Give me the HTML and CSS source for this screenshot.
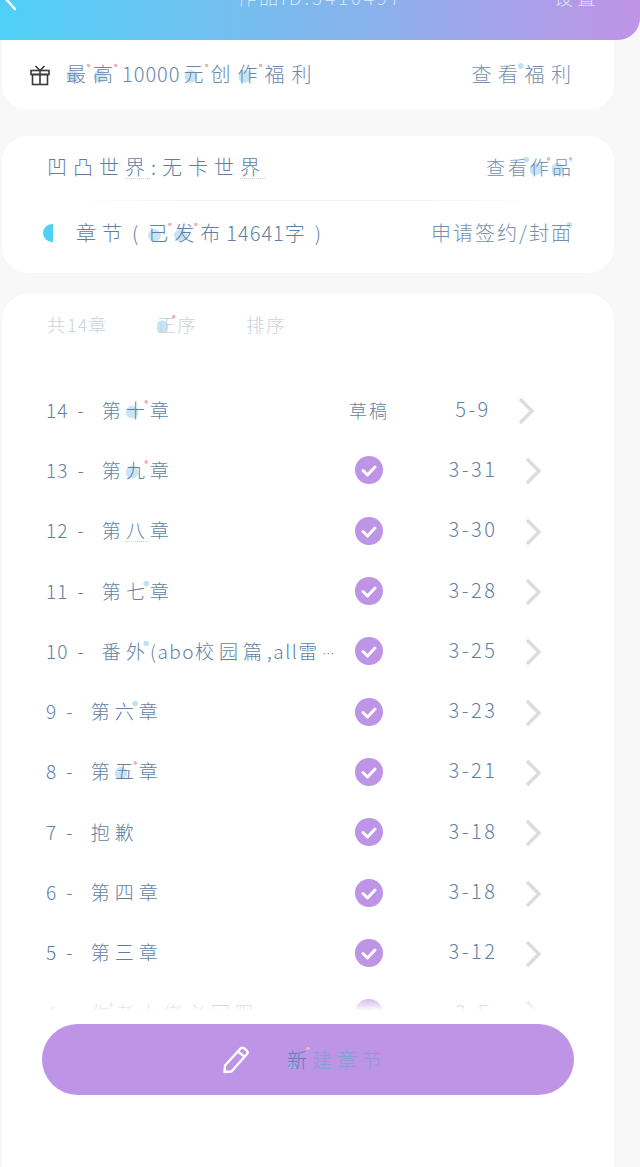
FILE: index.html
```html
<!doctype html>
<html lang="zh-CN">
  <head>
    <meta charset="UTF-8" />
    <meta name="viewport" content="width=device-width, initial-scale=1.0" />
    <title>作品管理</title>
    <link rel="stylesheet" href="styles.css">
  </head>
  <body>
    <header class="topbar">
      <svg class="back" width="18" height="14" viewBox="0 0 18 14"><path d="M5 -2 L15 9" fill="none" stroke="#fff" stroke-width="2.4" stroke-linecap="round"/></svg>
      <span class="topbar-title">作品ID:5410497</span>
      <span class="topbar-action">设置</span>
    </header>

    <section class="card welfare">
      <svg class="gift" width="22" height="22" viewBox="0 0 22 22" fill="none" stroke="#3a3a3a" stroke-width="1.6"><rect x="2" y="6.5" width="18" height="4"/><rect x="3.5" y="10.5" width="15" height="10"/><path d="M11 6.5 V20.5 M11 6.5 L6.5 2 M11 6.5 L15.5 2"/></svg>
      <span class="welfare-text"><span class="m">最</span><span class="m">高</span><span class="d">10000</span><span class="m">元</span>创<span class="m">作</span>福利</span>
      <a class="link wide">查<span class="s">看</span>福利</a>
    </section>

    <section class="card info">
      <div class="info-row title-row">
        <span class="book-name">凹凸世<span class="u">界</span>:无卡世<span class="u">界</span></span>
        <a class="link small">查<span class="s">看</span><span class="m">作</span><span class="m">品</span></a>
      </div>
      <div class="divider"></div>
      <div class="info-row chapter-row">
        <span class="half-dot"></span>
        <span class="chapter-count">章节<span class="p">(</span><span class="m">已</span><span class="m">发</span>布<span class="d">14641</span>字<span class="p">)</span></span>
        <a class="link sign">申请签约/封<span class="s">面</span></a>
      </div>
    </section>

    <section class="card chapters">
      <div class="tabs">
        <span class="tab">共<span class="d">14</span>章</span>
        <span class="tab"><span class="m">正</span>序</span>
        <span class="tab">排序</span>
      </div>

      <ul class="list">
        <li class="row">
          <span class="name"><span class="num">14 -</span>第<span class="m">十</span>章</span>
          <span class="state">草稿</span>
          <span class="date">5-9</span>
          <svg class="arrow shifted" width="18" height="28" viewBox="0 0 18 28"><path d="M2 2 L14 14 L2 26" /></svg>
        </li>
        <li class="row">
          <span class="name"><span class="num">13 -</span>第<span class="m">九</span>章</span>
          <span class="state"><svg class="check" width="28" height="28" viewBox="0 0 28 28"><circle cx="14" cy="14" r="14" /><path d="M8 14.5 L12.5 19 L20 11" /></svg></span>
          <span class="date">3-31</span>
          <svg class="arrow" width="18" height="28" viewBox="0 0 18 28"><path d="M2 2 L14 14 L2 26" /></svg>
        </li>
        <li class="row">
          <span class="name"><span class="num">12 -</span>第<span class="u">八</span>章</span>
          <span class="state"><svg class="check" width="28" height="28" viewBox="0 0 28 28"><circle cx="14" cy="14" r="14" /><path d="M8 14.5 L12.5 19 L20 11" /></svg></span>
          <span class="date">3-30</span>
          <svg class="arrow" width="18" height="28" viewBox="0 0 18 28"><path d="M2 2 L14 14 L2 26" /></svg>
        </li>
        <li class="row">
          <span class="name"><span class="num">11 -</span>第<span class="s">七</span>章</span>
          <span class="state"><svg class="check" width="28" height="28" viewBox="0 0 28 28"><circle cx="14" cy="14" r="14" /><path d="M8 14.5 L12.5 19 L20 11" /></svg></span>
          <span class="date">3-28</span>
          <svg class="arrow" width="18" height="28" viewBox="0 0 18 28"><path d="M2 2 L14 14 L2 26" /></svg>
        </li>
        <li class="row">
          <span class="name"><span class="num">10 -</span>番<span class="s">外</span><span class="lat">(abo</span>校园篇<span class="lat">,all</span>雷<span class="more">…</span></span>
          <span class="state"><svg class="check" width="28" height="28" viewBox="0 0 28 28"><circle cx="14" cy="14" r="14" /><path d="M8 14.5 L12.5 19 L20 11" /></svg></span>
          <span class="date">3-25</span>
          <svg class="arrow" width="18" height="28" viewBox="0 0 18 28"><path d="M2 2 L14 14 L2 26" /></svg>
        </li>
        <li class="row">
          <span class="name"><span class="num">9 -</span>第<span class="s">六</span>章</span>
          <span class="state"><svg class="check" width="28" height="28" viewBox="0 0 28 28"><circle cx="14" cy="14" r="14" /><path d="M8 14.5 L12.5 19 L20 11" /></svg></span>
          <span class="date">3-23</span>
          <svg class="arrow" width="18" height="28" viewBox="0 0 18 28"><path d="M2 2 L14 14 L2 26" /></svg>
        </li>
        <li class="row">
          <span class="name"><span class="num">8 -</span>第<span class="m">五</span>章</span>
          <span class="state"><svg class="check" width="28" height="28" viewBox="0 0 28 28"><circle cx="14" cy="14" r="14" /><path d="M8 14.5 L12.5 19 L20 11" /></svg></span>
          <span class="date">3-21</span>
          <svg class="arrow" width="18" height="28" viewBox="0 0 18 28"><path d="M2 2 L14 14 L2 26" /></svg>
        </li>
        <li class="row">
          <span class="name"><span class="num">7 -</span>抱歉</span>
          <span class="state"><svg class="check" width="28" height="28" viewBox="0 0 28 28"><circle cx="14" cy="14" r="14" /><path d="M8 14.5 L12.5 19 L20 11" /></svg></span>
          <span class="date">3-18</span>
          <svg class="arrow" width="18" height="28" viewBox="0 0 18 28"><path d="M2 2 L14 14 L2 26" /></svg>
        </li>
        <li class="row">
          <span class="name"><span class="num">6 -</span>第四章</span>
          <span class="state"><svg class="check" width="28" height="28" viewBox="0 0 28 28"><circle cx="14" cy="14" r="14" /><path d="M8 14.5 L12.5 19 L20 11" /></svg></span>
          <span class="date">3-18</span>
          <svg class="arrow" width="18" height="28" viewBox="0 0 18 28"><path d="M2 2 L14 14 L2 26" /></svg>
        </li>
        <li class="row">
          <span class="name"><span class="num">5 -</span>第三章</span>
          <span class="state"><svg class="check" width="28" height="28" viewBox="0 0 28 28"><circle cx="14" cy="14" r="14" /><path d="M8 14.5 L12.5 19 L20 11" /></svg></span>
          <span class="date">3-12</span>
          <svg class="arrow" width="18" height="28" viewBox="0 0 18 28"><path d="M2 2 L14 14 L2 26" /></svg>
        </li>
        <li class="row">
          <span class="name"><span class="num">4 -</span><span class="m">作</span>者大佬必回限</span>
          <span class="state"><svg class="check" width="28" height="28" viewBox="0 0 28 28"><circle cx="14" cy="14" r="14" /><path d="M8 14.5 L12.5 19 L20 11" /></svg></span>
          <span class="date">3-5</span>
          <svg class="arrow" width="18" height="28" viewBox="0 0 18 28"><path d="M2 2 L14 14 L2 26" /></svg>
        </li>
      </ul>

      <button class="new-chapter">
        <svg width="30" height="30" viewBox="0 0 30 30" fill="none" stroke="#fff" stroke-width="2.4" stroke-linejoin="round"><path d="M3.5 27 L4 20.5 L19.5 3.5 Q21 2 23 3.2 L25.8 5.6 Q27.4 7.2 26 9 L10.5 26.5 Z M17 6.5 L23.8 12"/></svg>
        <span class="new-label"><span class="m">新</span>建章节</span>
      </button>
    </section>
  </body>
</html>
```

FILE: styles.css
```css
* {
  box-sizing: border-box;
}
html,
body {
  height: 100%;
}
body {
  margin: 0;
  background-color: #f8f8f8;
  color: #5f7fa5;
  font-family: "Noto Sans CJK SC", "Noto Sans", sans-serif;
  font-weight: 300;
  overflow: hidden;
}
ul {
  list-style: none;
  margin: 0;
  padding: 0;
}

/* top bar, cut off by the top of the screen */
.topbar {
  position: relative;
  height: 40px;
  display: flex;
  justify-content: center;
  overflow: hidden;
  background: linear-gradient(90deg, #4fd0f6 0%, #86b4ec 55%, #c093e6 100%);
  border-bottom-right-radius: 22px;
  color: #d5e4f6;
  font-size: 19px;
}
.back {
  position: absolute;
  left: 0;
  top: 0;
}
.topbar-title {
  margin-top: -17px;
  line-height: 28px;
  letter-spacing: 2.8px;
}
.topbar-action {
  position: absolute;
  right: 40px;
  top: -17px;
  line-height: 28px;
  letter-spacing: 4px;
}

.card {
  margin: 0 26px 0 2px;
  background-color: #fff;
  border-radius: 26px;
}
.link {
  color: #7490ae;
  font-size: 20px;
}
.link.wide {
  letter-spacing: 6.5px;
  margin-right: -6.5px;
}
.d {
  letter-spacing: 1px;
}

/* pastel spots of the handwriting font */
.m {
  background-image:
    radial-gradient(circle at 25% 60%, #c8e4f7 0 6px, transparent 6.5px),
    radial-gradient(circle at 84% 22%, #f2b3b3 0 1.5px, transparent 2px);
}
.s {
  background-image: radial-gradient(circle at 84% 24%, #bfe0f5 0 2.5px, transparent 3px);
}
.u {
  text-decoration: underline dotted #c4d3e4 1px;
  text-underline-offset: 3px;
}
.p {
  padding: 0 4px;
}

.welfare {
  height: 70px;
  display: flex;
  align-items: center;
  padding: 0 43px 0 27px;
  border-radius: 0 0 26px 26px;
}
.gift {
  margin-right: 15px;
  margin-top: -1px;
}
.welfare-text {
  flex: 1;
  font-size: 20px;
  letter-spacing: 7px;
  padding-bottom: 3px;
  color: #6b88ab;
}
.welfare-text .d {
  padding: 0 3px 0 2px;
}
.welfare .link {
  padding-bottom: 3px;
}

.info {
  height: 137px;
  margin-top: 26px;
  padding: 0 43px 0 41px;
}
.info-row {
  display: flex;
  align-items: center;
  justify-content: space-between;
}
.title-row {
  height: 64px;
  padding: 0 0 4px 4px;
}
.book-name {
  font-size: 20px;
  letter-spacing: 6px;
}
.link.small {
  font-size: 19px;
  letter-spacing: 3px;
  margin-right: -3px;
}
.divider {
  height: 1px;
  margin: 0 30px;
  background: linear-gradient(90deg, transparent, #f0f0f0 30%, #f0f0f0 70%, transparent);
}
.chapter-row {
  height: 64px;
}
.half-dot {
  width: 10px;
  height: 18px;
  border-radius: 10px 0 0 10px;
  background-color: #4fd0f6;
  margin-right: 23px;
}
.chapter-count {
  flex: 1;
  font-size: 20px;
  letter-spacing: 6px;
  white-space: nowrap;
  padding-bottom: 2px;
}
.link.sign {
  font-size: 20px;
  letter-spacing: 2px;
  margin-right: -2px;
  white-space: nowrap;
  padding-bottom: 2px;
}

.chapters {
  height: 873px;
  margin-top: 21px;
  padding: 0 28px 0 44px;
  overflow: hidden;
  border-radius: 26px 26px 0 0;
}
.tabs {
  display: flex;
  gap: 49px;
  height: 60px;
  padding-left: 1px;
  align-items: center;
  color: #c9d2dc;
  font-size: 18px;
  letter-spacing: 2px;
}
.list {
  height: 632px;
  margin-top: 26px;
  overflow: hidden;
  position: relative;
}
/* fade for rows going under the button */
.list::after {
  content: "";
  position: absolute;
  left: 0;
  right: 0;
  bottom: 0;
  height: 18px;
  background: linear-gradient(rgba(255, 255, 255, 0.1), #fff 95%);
}
.row {
  display: flex;
  align-items: center;
  height: 60.3px;
  font-size: 19px;
}
.name {
  width: 295px;
  flex-shrink: 0;
  white-space: nowrap;
  overflow: hidden;
  letter-spacing: 5px;
  padding-bottom: 2px;
}
.num {
  letter-spacing: 1px;
  word-spacing: 4px;
  margin-right: 17px;
}
.lat {
  letter-spacing: 1.5px;
}
.more {
  font-size: 12px;
  letter-spacing: 0;
}
.state {
  width: 56px;
  flex-shrink: 0;
  display: flex;
  justify-content: center;
  font-size: 18px;
  letter-spacing: 2px;
  white-space: nowrap;
}
.date {
  width: 110px;
  flex-shrink: 0;
  margin-left: 21px;
  font-size: 20px;
  text-align: center;
  letter-spacing: 2.5px;
  padding-bottom: 4px;
}
.check circle {
  fill: #bd94e6;
}
.check path {
  fill: none;
  stroke: #fff;
  stroke-width: 3;
  stroke-linecap: round;
  stroke-linejoin: round;
}
.arrow {
  flex-shrink: 0;
  margin: 2px 0 0 -3px;
}
.arrow.shifted {
  margin-left: -10px;
}
.arrow path {
  fill: none;
  stroke: #dcdcdc;
  stroke-width: 3.4;
}

.new-chapter {
  display: flex;
  align-items: center;
  justify-content: center;
  gap: 36px;
  width: 532px;
  height: 71px;
  margin: 12px 0 0 -4px;
  position: relative;
  border: none;
  border-radius: 36px;
  background-color: #bd94e6;
  font-family: inherit;
  font-weight: 300;
  padding: 0 8px 0 0;
}
.new-label {
  color: #8a9ed0;
  font-size: 20px;
  letter-spacing: 5px;
}
.new-label .m {
  color: #5f7fc0;
  background-image:
    radial-gradient(circle at 20% 70%, #a9b4e4 0 4px, transparent 4.5px),
    radial-gradient(circle at 84% 12%, #f2b3c8 0 1.5px, transparent 2px);
}
```
